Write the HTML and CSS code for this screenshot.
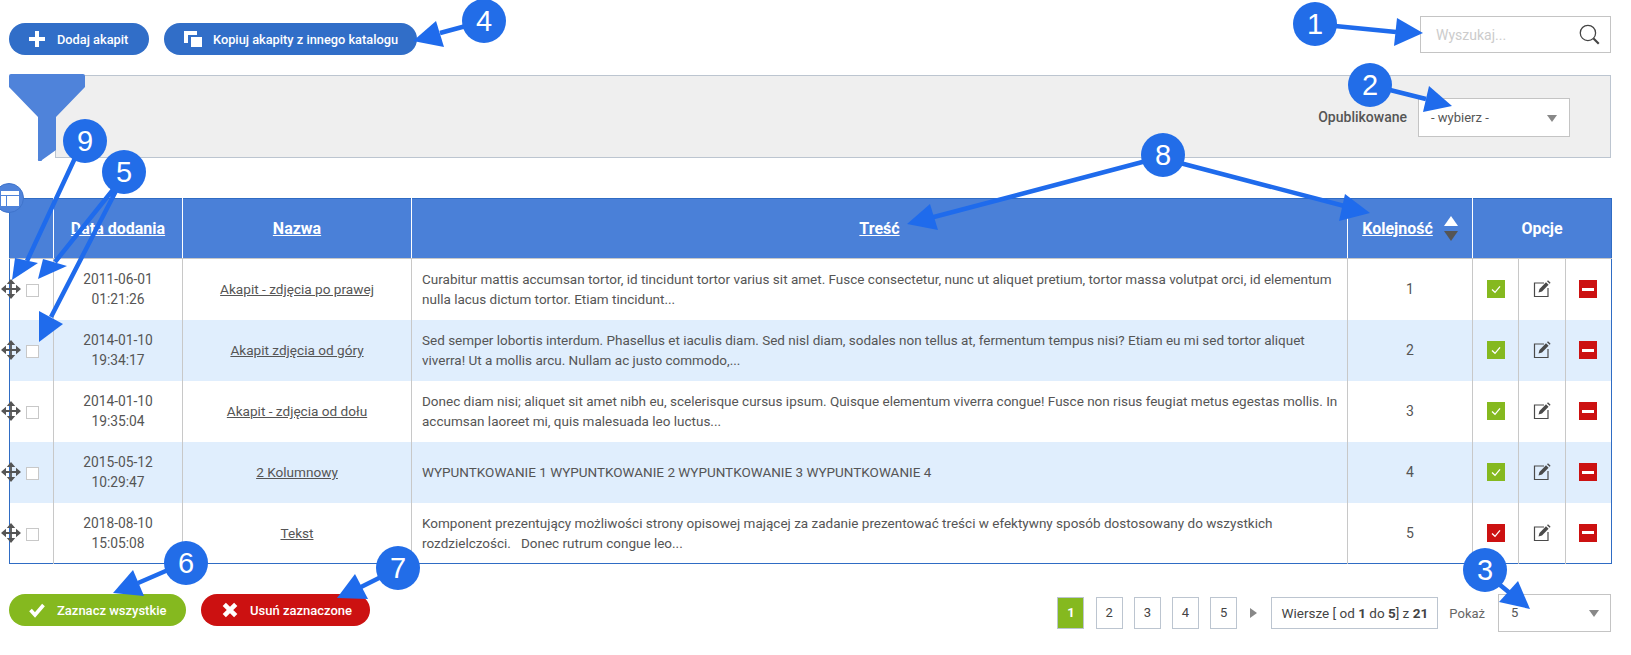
FILE: index.html
```html
<!DOCTYPE html>
<html lang="pl">
<head>
<meta charset="UTF-8">
<title>Akapity</title>
<link rel="stylesheet" href="styles.css">
</head>
<body>

<svg class="sprite">
  <symbol id="i-ok" viewBox="0 0 18 18"><path d="M5 9.5l3 2.8 5-6" fill="none" stroke="#fff" stroke-width="1.3"/></symbol>
  <symbol id="i-edit" viewBox="0 0 18 18">
    <path d="M11 3H1.5v13.5H15V8" fill="none" stroke="#4a4a4a" stroke-width="1.2"/>
    <path d="M5.5 12.5l1-3.5 6.5-6.8 2.6 2.5-6.6 6.7z" fill="#4a4a4a"/>
    <path d="M14 1.2l1-1 2.6 2.5-1 1.1z" fill="#4a4a4a"/>
  </symbol>
  <symbol id="i-move" viewBox="0 0 20 20">
    <path d="M2.5 10h15M10 2.5v15" stroke="#555" stroke-width="1.8"/>
    <path d="M10 0l4.2 5H5.800zM10 20l4.200-5H5.800zM0 10l5-4.200v8.400zM20 10l-5-4.200v8.400z" fill="#555"/>
  </symbol>
</svg>

<div class="toolbar">
  <div class="toolbar-btns">
    <a class="btn btn-blue btn-add">
      <svg class="btn-ico" viewBox="0 0 16 16"><path d="M6 0h4v6h6v4h-6v6H6v-6H0V6h6z" fill="#fff"/></svg>
      Dodaj akapit
    </a>
    <a class="btn btn-blue btn-copy">
      <svg class="btn-ico btn-ico-wide" viewBox="0 0 18 16" preserveAspectRatio="none"><path d="M0 0h13v4H4v8H0z" fill="#fff"/><path d="M7 6h11v10H7z" fill="#fff"/></svg>
      Kopiuj akapity z innego katalogu
    </a>
  </div>
  <div class="search">
    <input class="search-input" type="text" placeholder="Wyszukaj...">
    <svg class="search-ico" viewBox="0 0 20 20">
      <circle cx="8.5" cy="8.5" r="7.3" fill="none" stroke="#444" stroke-width="1.2"/>
      <path d="M13.8 13.8l5 5" stroke="#444" stroke-width="2"/>
    </svg>
  </div>
</div>

<div class="filter">
  <span class="filter-label">Opublikowane</span>
  <div class="select select-filter">- wybierz -</div>
</div>

<div class="table-wrap">
  <span class="layout-btn">
    <svg viewBox="0 0 18 15"><path d="M0 0h18v4H0zM0 5h5v10H0zM6 5h12v10H6z" fill="#fff"/></svg>
  </span>
  <table class="list">
    <colgroup>
      <col class="c-check"><col class="c-date"><col class="c-name"><col class="c-text"><col class="c-order">
      <col class="c-opt"><col class="c-opt"><col class="c-opt">
    </colgroup>
    <thead>
      <tr>
        <th></th>
        <th><a>Data dodania</a></th>
        <th><a>Nazwa</a></th>
        <th><a>Treść</a></th>
        <th>
          <span class="sort"><a>Kolejność</a><span class="sort-arrows"><i class="up"></i><i class="down"></i></span></span>
        </th>
        <th colspan="3">Opcje</th>
      </tr>
    </thead>
    <tbody>
      <tr>
        <td class="td-check"><svg class="move"><use href="#i-move"/></svg><span class="check"></span></td>
        <td class="td-date">2011-06-01<br>01:21:26</td>
        <td class="td-name"><a>Akapit - zdjęcia po prawej</a></td>
        <td class="td-text">Curabitur mattis accumsan tortor, id tincidunt tortor varius sit amet. Fusce consectetur, nunc ut aliquet pretium, tortor massa volutpat orci, id elementum nulla lacus dictum tortor. Etiam tincidunt...</td>
        <td>1</td>
        <td><span class="ico ico-green"><svg><use href="#i-ok"/></svg></span></td>
        <td><svg class="ico"><use href="#i-edit"/></svg></td>
        <td><span class="ico ico-red"><i class="minus"></i></span></td>
      </tr>
      <tr>
        <td class="td-check"><svg class="move"><use href="#i-move"/></svg><span class="check"></span></td>
        <td class="td-date">2014-01-10<br>19:34:17</td>
        <td class="td-name"><a>Akapit zdjęcia od góry</a></td>
        <td class="td-text">Sed semper lobortis interdum. Phasellus et iaculis diam. Sed nisl diam, sodales non tellus at, fermentum tempus nisi? Etiam eu mi sed tortor aliquet viverra! Ut a mollis arcu. Nullam ac justo commodo,...</td>
        <td>2</td>
        <td><span class="ico ico-green"><svg><use href="#i-ok"/></svg></span></td>
        <td><svg class="ico"><use href="#i-edit"/></svg></td>
        <td><span class="ico ico-red"><i class="minus"></i></span></td>
      </tr>
      <tr>
        <td class="td-check"><svg class="move"><use href="#i-move"/></svg><span class="check"></span></td>
        <td class="td-date">2014-01-10<br>19:35:04</td>
        <td class="td-name"><a>Akapit - zdjęcia od dołu</a></td>
        <td class="td-text">Donec diam nisi; aliquet sit amet nibh eu, scelerisque cursus ipsum. Quisque elementum viverra congue! Fusce non risus feugiat metus egestas mollis. In accumsan laoreet mi, quis malesuada leo luctus...</td>
        <td>3</td>
        <td><span class="ico ico-green"><svg><use href="#i-ok"/></svg></span></td>
        <td><svg class="ico"><use href="#i-edit"/></svg></td>
        <td><span class="ico ico-red"><i class="minus"></i></span></td>
      </tr>
      <tr>
        <td class="td-check"><svg class="move"><use href="#i-move"/></svg><span class="check"></span></td>
        <td class="td-date">2015-05-12<br>10:29:47</td>
        <td class="td-name"><a>2 Kolumnowy</a></td>
        <td class="td-text">WYPUNTKOWANIE 1 WYPUNTKOWANIE 2 WYPUNTKOWANIE 3 WYPUNTKOWANIE 4</td>
        <td>4</td>
        <td><span class="ico ico-green"><svg><use href="#i-ok"/></svg></span></td>
        <td><svg class="ico"><use href="#i-edit"/></svg></td>
        <td><span class="ico ico-red"><i class="minus"></i></span></td>
      </tr>
      <tr>
        <td class="td-check"><svg class="move"><use href="#i-move"/></svg><span class="check"></span></td>
        <td class="td-date">2018-08-10<br>15:05:08</td>
        <td class="td-name"><a>Tekst</a></td>
        <td class="td-text">Komponent prezentujący możliwości strony opisowej mającej za zadanie prezentować treści w efektywny sposób dostosowany do wszystkich rozdzielczości. &nbsp; Donec rutrum congue leo...</td>
        <td>5</td>
        <td><span class="ico ico-red"><svg><use href="#i-ok"/></svg></span></td>
        <td><svg class="ico"><use href="#i-edit"/></svg></td>
        <td><span class="ico ico-red"><i class="minus"></i></span></td>
      </tr>
    </tbody>
  </table>
</div>

<div class="footer">
  <div class="footer-btns">
    <a class="btn btn-green btn-all">
      <svg class="btn-ico" viewBox="0 0 16 14"><path d="M1.5 7l4.5 5L14.5 2" fill="none" stroke="#fff" stroke-width="3.6"/></svg>
      Zaznacz wszystkie
    </a>
    <a class="btn btn-red btn-del">
      <svg class="btn-ico" viewBox="0 0 14 14"><path d="M2 2l10 10M12 2L2 12" fill="none" stroke="#fff" stroke-width="4"/></svg>
      Usuń zaznaczone
    </a>
  </div>
  <div class="pager">
    <a class="page page-on">1</a>
    <a class="page">2</a>
    <a class="page">3</a>
    <a class="page">4</a>
    <a class="page">5</a>
    <i class="page-next"></i>
    <span class="rows-info">Wiersze [ od <b>1</b> do <b>5</b>] z <b>21</b></span>
    <span class="show-label">Pokaż</span>
    <div class="select select-show">5</div>
  </div>
</div>

<!-- numbered callouts drawn over the screenshot -->
<svg class="notes" viewBox="0 0 1631 655">
  <g class="note-lines">
    <path d="M1335 26L1396 32M1390 90L1426 99M466 26L440 33M75 158L27 261M116 186L55 262M118 187L51 317M168 570L138 583M387 574L361 587M1494 580L1511 594M1150 160L930 218M1180 163L1352 208"/>
  </g>
  <g class="note-heads">
    <polygon points="1423,33 1397,18 1394,46"/>
    <polygon points="1452,106 1429,86 1423,112"/>
    <polygon points="413,41 436,21 444,47"/>
    <polygon points="12,280 15,258 38,263"/>
    <polygon points="38,279 43,259 67,266"/>
    <polygon points="39,342 39,311 63,324"/>
    <polygon points="113,593 133,570 144,596"/>
    <polygon points="337,598 355,574 368,599"/>
    <polygon points="1530,609 1518,581 1499,602"/>
    <polygon points="907,224 930,204 938,230"/>
    <polygon points="1370,213 1345,194 1339,221"/>
  </g>
  <g class="note-dots">
    <circle cx="1315" cy="24" r="22"/>
    <circle cx="1370" cy="85" r="22"/>
    <circle cx="1485" cy="570" r="22"/>
    <circle cx="484" cy="21" r="22"/>
    <circle cx="124" cy="172" r="22"/>
    <circle cx="186" cy="563" r="22"/>
    <circle cx="398" cy="568" r="22"/>
    <circle cx="1163" cy="155" r="22"/>
    <circle cx="85" cy="141" r="22"/>
  </g>
  <g class="note-nums">
    <text x="1315" y="34">1</text>
    <text x="1370" y="95">2</text>
    <text x="1485" y="580">3</text>
    <text x="484" y="31">4</text>
    <text x="124" y="182">5</text>
    <text x="186" y="573">6</text>
    <text x="398" y="578">7</text>
    <text x="1163" y="165">8</text>
    <text x="85" y="151">9</text>
  </g>
</svg>

<!-- funnel tab on top of the filter panel -->
<svg class="funnel" viewBox="0 0 76 87"><path d="M2 0h72a2 2 0 0 1 2 2v11L47 43v33L33 86a2 2 0 0 1-4-1V43L0 13V2a2 2 0 0 1 2-2z"/></svg>

</body>
</html>
```
FILE: styles.css
```css
*,*::before,*::after{box-sizing:border-box}
body{
  position:relative;
  margin:0;
  height:655px;
  padding:16px 20px 0 9px;
  overflow:hidden;
  background:#fff;
  font-family:Roboto,'Liberation Sans',sans-serif;
  font-size:14px;
  color:#555;
}
.sprite{display:none}

/* === TOP BAR === */
.toolbar{display:flex;justify-content:space-between;align-items:flex-start;height:37px}
.toolbar-btns{display:flex;gap:15px;padding-top:7px}

.btn{
  display:flex;
  align-items:center;
  height:32px;
  border-radius:16px;
  color:#fff;
  font-size:13px;
  font-weight:500;
  white-space:nowrap;
}
.btn-blue{background:#316ec8;font-size:12.8px}
.btn-green{background:#85b91f}
.btn-red{background:#cc1111}
.btn-ico{flex:none;width:16px;height:16px}
.btn-ico-wide{width:18px}
.btn-add{width:140px;padding-left:20px;gap:12px}
.btn-copy{width:253px;padding-left:20px;gap:11px}
.btn-all{width:177px;padding-left:20px;gap:12px}
.btn-del{width:169px;padding-left:21px;gap:12px}

.search{
  display:flex;
  align-items:center;
  width:191px;
  height:37px;
  border:1px solid #c4c4c4;
  background:#fff;
  padding:0 10px 0 15px;
}
.search-input{
  flex:1;
  min-width:0;
  border:0;
  outline:0;
  padding:0;
  background:none;
  font:14px Roboto,sans-serif;
}
.search-input::placeholder{color:#ccc}
.search-ico{width:21px;height:21px}

/* === FILTER PANEL === */
.filter{
  display:flex;
  justify-content:flex-end;
  align-items:center;
  gap:11px;
  height:83px;
  margin:22px 0 0 46px;
  padding:2px 40px 0 0;
  border:1px solid #bcc5d0;
  background:#efefef;
}
.filter-label{font-size:14px;font-weight:500;color:#555;position:relative;top:-1px}
.funnel{position:absolute;left:9px;top:74px;width:76px;height:87px;fill:#4f83da}

.select{
  position:relative;
  border:1px solid #c4c4c4;
  background:#fff;
  font-size:13px;
  color:#555;
}
.select::after{
  content:"";
  position:absolute;
  top:50%;
  margin-top:-3px;
  border:5px solid transparent;
  border-top:7px solid #888;
  border-bottom:0;
}
.select-filter{width:152px;height:39px;line-height:37px;padding-left:12px}
.select-filter::after{right:12px}
.select-show{width:113px;height:38px;line-height:36px;padding-left:12px}
.select-show::after{right:11px}

/* === TABLE === */
.table-wrap{position:relative;margin-top:40px}
.layout-btn{
  position:absolute;
  left:-15px;
  top:-15px;
  z-index:2;
  display:flex;
  align-items:center;
  justify-content:center;
  width:30px;
  height:30px;
  border:1px solid #3f74cc;
  border-radius:50%;
  background:#4f83da;
}
.layout-btn svg{width:18px;height:15px;margin-left:1px}

.list{width:1602px;table-layout:fixed;border-collapse:collapse;border:1px solid #2f6cc4}
.c-check{width:44px}
.c-date{width:129px}
.c-name{width:229px}
.c-text{width:936px}
.c-order{width:125px}
.c-opt{width:46.33px}

.list th{
  height:60px;
  background:#4a80d8;
  border-left:1px solid #fff;
  border-bottom:1px solid #c8c8c8;
  color:#fff;
  font-size:16px;
  font-weight:700;
}
.list th:first-child{border-left:0}
.list th a{text-decoration:underline}
.list td{
  position:relative;
  height:61px;
  padding:0;
  border-left:1px solid #c8c8c8;
  text-align:center;
  line-height:20px;
  font-size:14px;
}
.list td:first-child{border-left:0}
.list td a{text-decoration:underline}
.list tbody tr:nth-child(even) td{background:#e0eefd}
.list .td-name{font-size:13.6px}
.list .td-date{font-size:13.8px}
.list .td-text{padding:0 6px 0 10px;text-align:left;font-size:13.5px}

.sort{display:inline-flex;align-items:center;gap:11px}
.sort-arrows{display:flex;flex-direction:column;gap:5px}
.sort-arrows i{display:block;border:7px solid transparent;border-top:0;border-bottom:10px solid #fff}
.sort-arrows .down{border-top:10px solid #555;border-bottom:0}

.move{position:absolute;left:-9px;top:50%;width:20px;height:20px;margin-top:-10px}
.check{
  position:absolute;
  left:16px;
  top:50%;
  margin-top:-5px;
  width:13px;
  height:13px;
  border:1px solid #c8c8c8;
  background:#fff;
}

.ico{display:block;width:18px;height:18px;margin:0 auto}
.ico-green{background:#85b91f}
.ico-red{background:#cc1111}
.ico svg{display:block;width:18px;height:18px}
.minus{display:block;width:12px;height:3px;margin:0 auto;position:relative;top:7.5px;background:#fff}

/* === BOTTOM BAR === */
.footer{display:flex;justify-content:space-between;align-items:flex-start;margin-top:30px}
.footer-btns{display:flex;gap:15px}
.pager{display:flex;align-items:center}
.page{
  display:block;
  width:27px;
  height:32px;
  line-height:30px;
  margin-right:11.200px;
  border:1px solid #bcc5d0;
  background:#fff;
  text-align:center;
  font-size:13px;
  color:#444;
}
.page-on{background:#85b91f;color:#fff;font-weight:700}
.page-next{
  display:block;
  margin:0 14px 0 2px;
  border:5px solid transparent;
  border-left:7px solid #888;
  border-right:0;
}
.rows-info{
  display:block;
  width:167px;
  height:32px;
  line-height:30px;
  border:1px solid #bcc5d0;
  text-align:center;
  font-size:13.5px;
  color:#444;
  white-space:nowrap;
}
.show-label{margin:0 13px 0 11px;font-size:13px;color:#666}

/* === CALLOUTS === */
.notes{position:absolute;left:0;top:0;width:1631px;height:655px;pointer-events:none}
.note-lines path{fill:none;stroke:#1f6bec;stroke-width:4.5}
.note-heads polygon{fill:#1f6bec}
.note-dots circle{fill:#226de8}
.note-nums text{fill:#fff;font-family:'Liberation Sans',sans-serif;font-size:29px;text-anchor:middle}
```
